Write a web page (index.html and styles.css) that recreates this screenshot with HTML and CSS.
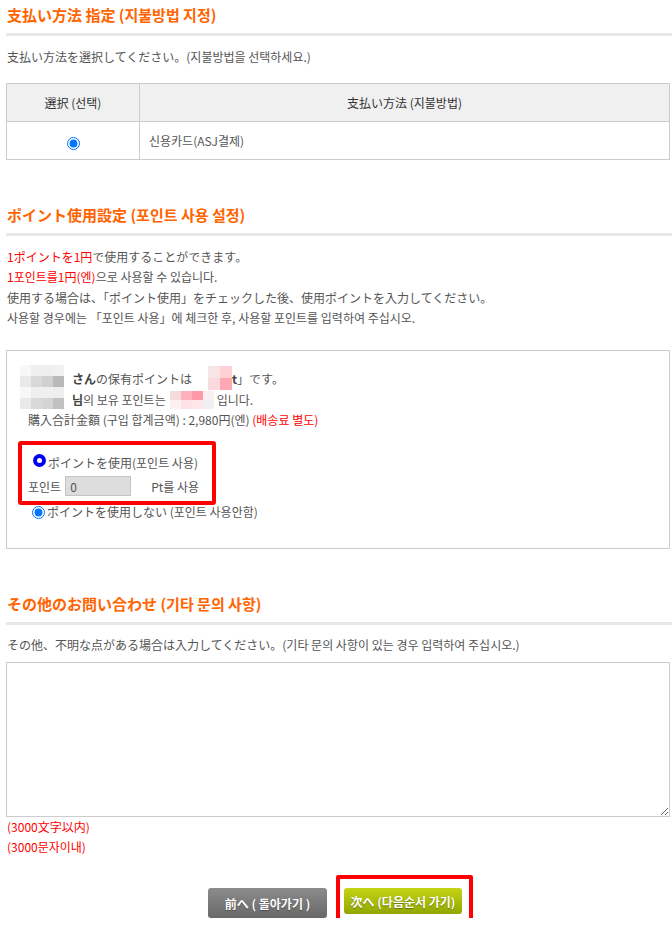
FILE: index.html
```html
<!DOCTYPE html>
<html lang="ja">
<head>
  <meta charset="UTF-8">
  <meta name="viewport" content="width=device-width, initial-scale=1.0">
  <title>ご注文手続き</title>
  <link rel="stylesheet" href="styles.css">
</head>
<body>
  <div class="wrap">

    <!-- 支払い方法 -->
    <section class="block first">
      <h2 class="title">支払い方法 指定 (지불방법 지정)</h2>
      <p class="lead">支払い方法を選択してください。(지불방법을 선택하세요.)</p>
      <table class="pay-table">
        <tr>
          <th class="col-select">選択 (선택)</th>
          <th>支払い方法 (지불방법)</th>
        </tr>
        <tr>
          <td class="col-select"><input type="radio" name="pay" checked></td>
          <td class="pay-name">신용카드(ASJ결제)</td>
        </tr>
      </table>
    </section>

    <!-- ポイント -->
    <section class="block">
      <h2 class="title">ポイント使用設定 (포인트 사용 설정)</h2>
      <div class="notes">
        <p><span class="red">1ポイントを1円</span>で使用することができます。</p>
        <p><span class="red">1포인트를1円(엔)</span>으로 사용할 수 있습니다.</p>
        <p>使用する場合は、「ポイント使用」をチェックした後、使用ポイントを入力してください。</p>
        <p>사용할 경우에는 「포인트 사용」에 체크한 후, 사용할 포인트를 입력하여 주십시오.</p>
      </div>

      <div class="point-box">
        <div class="member">
          <div class="mosaic grey">
            <i style="background:#f7f7f7"></i><i style="background:#efefef"></i><i style="background:#efefef"></i><i style="background:#f1f1f1"></i>
            <i style="background:#e9e9e9"></i><i style="background:#d8d8d8"></i><i style="background:#d0d0d0"></i><i style="background:#b9b9b9"></i>
            <i style="background:#f7f7f7"></i><i style="background:#efefef"></i><i style="background:#efefef"></i><i style="background:#eeeeee"></i>
            <i style="background:#e9e9e9"></i><i style="background:#d9d9d9"></i><i style="background:#d4d4d4"></i><i style="background:#c1c1c1"></i>
          </div>
          <div class="member-lines">
            <p><b>さん</b>の保有ポイントは
              <span class="mosaic pink-a">
                <i style="background:#f7e4e6"></i><i style="background:#ffd0d6"></i>
                <i style="background:#fadadf"></i><i style="background:#ffa8b4"></i>
              </span><b class="pt">t</b>」です。</p>
            <p><b>님</b>의 보유 포인트는
              <span class="mosaic pink-b">
                <i style="background:#f5dcdc"></i><i style="background:#ffb0bc"></i><i style="background:#ff98a8"></i><i style="background:#f8f0f0"></i>
                <i style="background:#fdf0f0"></i><i style="background:#ffe0e6"></i><i style="background:#ffe6ea"></i><i style="background:#f0f0f2"></i>
              </span>입니다.</p>
          </div>
        </div>
        <p class="total">購入合計金額 (구입 합계금액) : 2,980円(엔) <span class="red">(배송료 별도)</span></p>

        <div class="mark-box">
          <label class="opt opt-use"><span class="dot"></span>ポイントを使用(포인트 사용)</label>
          <div class="use-row">
            포인트 <input type="text" class="pt-input" value="0"> <span class="pt-unit">Pt를 사용</span>
          </div>
        </div>
        <label class="opt opt-none"><input type="radio" name="usept" checked>ポイントを使用しない (포인트 사용안함)</label>
      </div>
    </section>

    <!-- お問い合わせ -->
    <section class="block">
      <h2 class="title">その他のお問い合わせ (기타 문의 사항)</h2>
      <p class="lead lead-small">その他、不明な点がある場合は入力してください。(기타 문의 사항이 있는 경우 입력하여 주십시오.)</p>
      <textarea class="memo"></textarea>
      <p class="limit">(3000文字以内)</p>
      <p class="limit">(3000문자이내)</p>
    </section>

    <div class="buttons">
      <button class="btn btn-back">前へ ( 돌아가기 )</button>
      <span class="marked">
        <button class="btn btn-next">次へ (다음순서 가기)</button>
      </span>
    </div>

  </div>
</body>
</html>
```

FILE: styles.css
```css
/* 基本 */
* {
  margin: 0;
  padding: 0;
  box-sizing: border-box;
}
body {
  font-family: "Noto Sans CJK KR", "Noto Sans CJK JP", sans-serif;
  font-size: 12px;
  color: #555;
  background: #fff;
}
.wrap {
  padding: 0 2px 0 6px;
}
.red {
  color: #f00;
}

/* 見出し */
.block {
  margin-top: 40px;
}
.block.first {
  margin-top: 0;
}
.title {
  font-size: 15px;
  font-weight: bold;
  color: #ff6400;
  line-height: 18px;
  padding: 6px 0 9px 1px;
  border-bottom: 3px solid #e5e7ea;
  margin-right: -2px;
}
.lead {
  line-height: 18px;
  margin: 12px 0 17px 1px;
}
.lead-small {
  margin: 11px 0 8px 1px;
}

/* 支払い方法テーブル */
.pay-table {
  width: 100%;
  border-collapse: collapse;
}
.pay-table th,
.pay-table td {
  border: 1px solid #ccc;
  height: 38px;
  font-weight: normal;
}
.pay-table th {
  background: #f0f0f0;
  color: #333;
  text-align: center;
}
.pay-table .col-select {
  width: 133px;
  text-align: center;
}
.pay-table input[type="radio"] {
  width: 13px;
  height: 13px;
  margin-top: 4px;
  vertical-align: middle;
}
.pay-name {
  padding-left: 9px;
}

/* ポイント説明 */
.notes {
  margin: 11px 0 22px 1px;
}
.notes p {
  line-height: 20.3px;
}

/* ポイントボックス */
.point-box {
  border: 1px solid #ccc;
  padding: 14px 13px 26px;
}
.member {
  display: flex;
  gap: 8px;
}
.mosaic {
  display: grid;
  flex-shrink: 0;
}
.mosaic i {
  display: block;
}
.mosaic.grey {
  grid-template-columns: repeat(4, 11px);
  grid-auto-rows: 11px;
}
.member-lines p {
  height: 21px;
  line-height: 21px;
  display: flex;
  align-items: center;
}
.member-lines p:first-child {
  margin-top: 3px;
}
.member-lines b {
  color: #444;
}
.mosaic.pink-a {
  display: inline-grid;
  grid-template-columns: repeat(2, 12px);
  grid-auto-rows: 12px;
  margin: 0 0 2px 16px;
}
.mosaic.pink-b {
  display: inline-grid;
  grid-template-columns: repeat(4, 11px);
  grid-auto-rows: 9px;
  margin: 0 3px 0 4px;
}
.pt {
  color: #e0003c;
}
.total {
  line-height: 20px;
  padding-left: 8px;
}

/* 赤枠 */
.mark-box {
  position: relative;
  z-index: 1;
  width: 198px;
  margin: 11px 0 -3px -2px;
  border: 4px solid #f00;
  border-radius: 3px;
  padding: 8px 6px 5px;
}
.opt {
  display: flex;
  align-items: center;
  line-height: 20px;
}
.opt-use {
  margin-left: 5px;
}
.dot {
  width: 13px;
  height: 13px;
  border-radius: 50%;
  background: #0000f0;
  position: relative;
  margin: -5px 2px 0 0;
}
.dot::after {
  content: "";
  position: absolute;
  left: 4px;
  top: 4px;
  width: 5px;
  height: 5px;
  border-radius: 50%;
  background: #fff;
}
.use-row {
  display: flex;
  align-items: center;
  margin-top: 3px;
  height: 20px;
  gap: 4px;
}
.pt-input {
  width: 66px;
  height: 20px;
  border: 1px solid #c4c4c4;
  background: #ddd;
  color: #555;
  font: 12px "Noto Sans CJK KR", sans-serif;
  padding: 0 4px;
}
.pt-unit {
  margin-left: 16px;
}
.opt-none {
  margin-left: 12px;
}
.opt-none input {
  width: 13px;
  height: 13px;
  margin: 0 2px 0 0;
}

/* お問い合わせ */
.memo {
  display: block;
  width: 100%;
  height: 155px;
  border: 1px solid #ccc;
  resize: vertical;
}
.limit {
  color: #f00;
  line-height: 20px;
  padding-left: 1px;
}

/* ボタン */
.buttons {
  display: flex;
  justify-content: center;
  align-items: flex-start;
  gap: 17px;
  margin-top: 31px;
  padding-right: 6px;
}
.btn {
  border: none;
  border-radius: 3px;
  color: #fff;
  font: bold 12px "Noto Sans CJK KR", sans-serif;
  text-shadow: 0 1px 1px rgba(0, 0, 0, 0.35);
  cursor: pointer;
}
.btn-back {
  width: 119px;
  height: 30px;
  background: linear-gradient(#8c8c8c, #686868);
}
.btn-next {
  width: 118px;
  height: 26px;
  background: linear-gradient(#c4d414, #92a600);
}
.marked {
  position: relative;
  display: block;
}
.marked::after {
  content: "";
  position: absolute;
  top: -13px;
  right: -11px;
  bottom: -9px;
  left: -8px;
  border: 4px solid #f00;
  border-radius: 2px;
}
```
